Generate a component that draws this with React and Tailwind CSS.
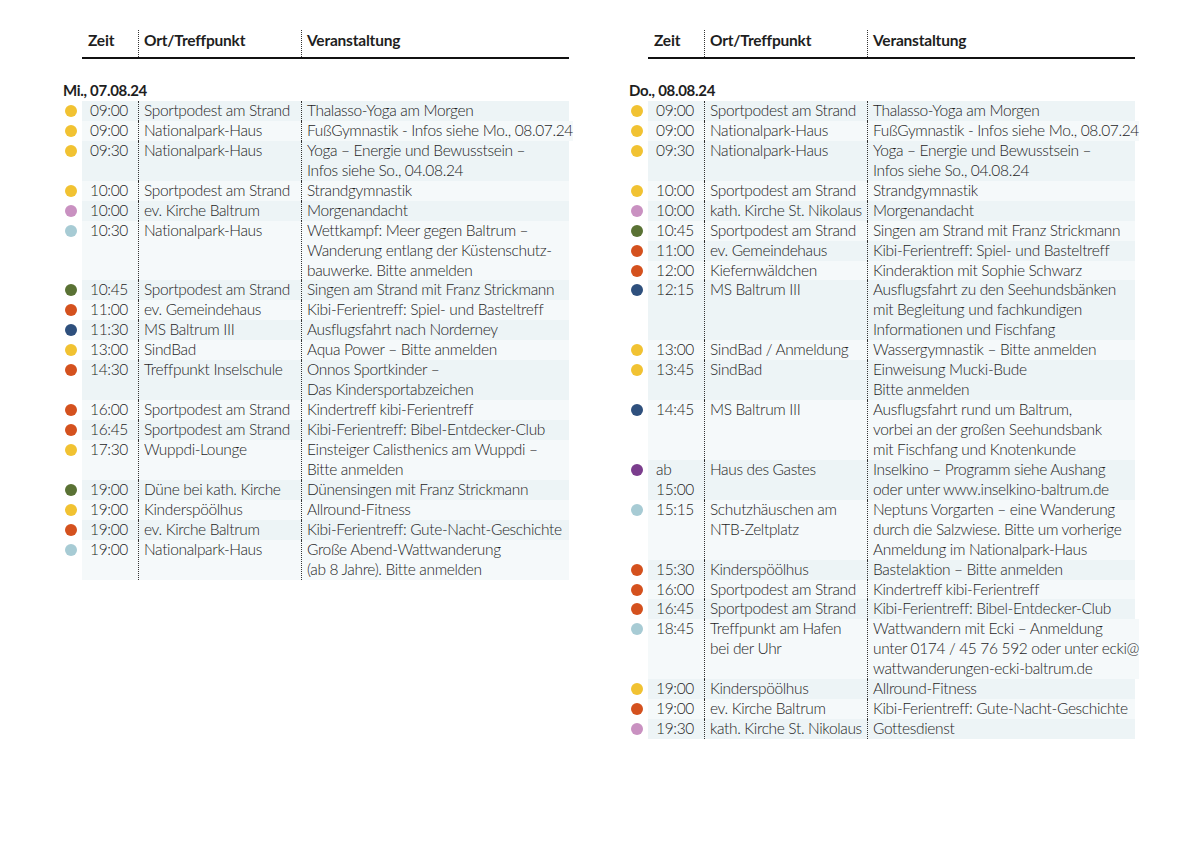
const dotColors = {
  y: "bg-[#f1c232]",
  p: "bg-[#c991c1]",
  b: "bg-[#a7cbd4]",
  g: "bg-[#5a7234]",
  o: "bg-[#d4511e]",
  n: "bg-[#2f507d]",
  v: "bg-[#7b3d8d]",
};

const wednesday = [
  ["y", "09:00", "Sportpodest am Strand", "Thalasso-Yoga am Morgen"],
  ["y", "09:00", "Nationalpark-Haus", "FußGymnastik - Infos siehe Mo., 08.07.24"],
  ["y", "09:30", "Nationalpark-Haus", "Yoga – Energie und Bewusstsein –\nInfos siehe So., 04.08.24"],
  ["y", "10:00", "Sportpodest am Strand", "Strandgymnastik"],
  ["p", "10:00", "ev. Kirche Baltrum", "Morgenandacht"],
  ["b", "10:30", "Nationalpark-Haus", "Wettkampf: Meer gegen Baltrum –\nWanderung entlang der Küstenschutz-\nbauwerke. Bitte anmelden"],
  ["g", "10:45", "Sportpodest am Strand", "Singen am Strand mit Franz Strickmann"],
  ["o", "11:00", "ev. Gemeindehaus", "Kibi-Ferientreff: Spiel- und Basteltreff"],
  ["n", "11:30", "MS Baltrum III", "Ausflugsfahrt nach Norderney"],
  ["y", "13:00", "SindBad", "Aqua Power – Bitte anmelden"],
  ["o", "14:30", "Treffpunkt Inselschule", "Onnos Sportkinder –\nDas Kindersportabzeichen"],
  ["o", "16:00", "Sportpodest am Strand", "Kindertreff kibi-Ferientreff"],
  ["o", "16:45", "Sportpodest am Strand", "Kibi-Ferientreff: Bibel-Entdecker-Club"],
  ["y", "17:30", "Wuppdi-Lounge", "Einsteiger Calisthenics am Wuppdi –\nBitte anmelden"],
  ["g", "19:00", "Düne bei kath. Kirche", "Dünensingen mit Franz Strickmann"],
  ["y", "19:00", "Kinderspöölhus", "Allround-Fitness"],
  ["o", "19:00", "ev. Kirche Baltrum", "Kibi-Ferientreff: Gute-Nacht-Geschichte"],
  ["b", "19:00", "Nationalpark-Haus", "Große Abend-Wattwanderung\n(ab 8 Jahre). Bitte anmelden"],
];

const thursday = [
  ["y", "09:00", "Sportpodest am Strand", "Thalasso-Yoga am Morgen"],
  ["y", "09:00", "Nationalpark-Haus", "FußGymnastik - Infos siehe Mo., 08.07.24"],
  ["y", "09:30", "Nationalpark-Haus", "Yoga – Energie und Bewusstsein –\nInfos siehe So., 04.08.24"],
  ["y", "10:00", "Sportpodest am Strand", "Strandgymnastik"],
  ["p", "10:00", "kath. Kirche St. Nikolaus", "Morgenandacht"],
  ["g", "10:45", "Sportpodest am Strand", "Singen am Strand mit Franz Strickmann"],
  ["o", "11:00", "ev. Gemeindehaus", "Kibi-Ferientreff: Spiel- und Basteltreff"],
  ["o", "12:00", "Kiefernwäldchen", "Kinderaktion mit Sophie Schwarz"],
  ["n", "12:15", "MS Baltrum III", "Ausflugsfahrt zu den Seehundsbänken\nmit Begleitung und fachkundigen\nInformationen und Fischfang"],
  ["y", "13:00", "SindBad / Anmeldung", "Wassergymnastik – Bitte anmelden"],
  ["y", "13:45", "SindBad", "Einweisung Mucki-Bude\nBitte anmelden"],
  ["n", "14:45", "MS Baltrum III", "Ausflugsfahrt rund um Baltrum,\nvorbei an der großen Seehundsbank\nmit Fischfang und Knotenkunde"],
  ["v", "ab\n15:00", "Haus des Gastes", "Inselkino – Programm siehe Aushang\noder unter www.inselkino-baltrum.de"],
  ["b", "15:15", "Schutzhäuschen am\nNTB-Zeltplatz", "Neptuns Vorgarten – eine Wanderung\ndurch die Salzwiese. Bitte um vorherige\nAnmeldung im Nationalpark-Haus"],
  ["o", "15:30", "Kinderspöölhus", "Bastelaktion – Bitte anmelden"],
  ["o", "16:00", "Sportpodest am Strand", "Kindertreff kibi-Ferientreff"],
  ["o", "16:45", "Sportpodest am Strand", "Kibi-Ferientreff: Bibel-Entdecker-Club"],
  ["b", "18:45", "Treffpunkt am Hafen\nbei der Uhr", "Wattwandern mit Ecki – Anmeldung\nunter 0174 / 45 76 592 oder unter ecki@\nwattwanderungen-ecki-baltrum.de"],
  ["y", "19:00", "Kinderspöölhus", "Allround-Fitness"],
  ["o", "19:00", "ev. Kirche Baltrum", "Kibi-Ferientreff: Gute-Nacht-Geschichte"],
  ["p", "19:30", "kath. Kirche St. Nikolaus", "Gottesdienst"],
];

function DayTable({ date, rows }) {
  let divider = "border-l border-dotted border-[#333]";
  return (
    <div className="w-[509px] flex flex-col">
      <div className="ml-[22px] flex h-[29px] border-b-2 border-[#111] font-bold text-[15.5px] leading-[20px] tracking-[-0.2px]">
        <div className="w-[56px] pl-[6px]">Zeit</div>
        <div className={`w-[163px] pl-[5px] ${divider}`}>Ort/Treffpunkt</div>
        <div className={`flex-1 pl-[5px] ${divider}`}>Veranstaltung</div>
      </div>
      <p className="mt-[23px] mb-[2px] ml-[3px] font-bold text-[15px] leading-[17px] tracking-[-0.3px]">{date}</p>
      {rows.map(([color, time, place, event], i) => (
        <div key={i} className="flex leading-[19.93px]">
          <div className="w-[22px] shrink-0">
            <div className={`ml-[5px] mt-[4px] w-[12px] h-[12px] rounded-full ${dotColors[color]}`} />
          </div>
          <div className={`flex flex-1 whitespace-pre-line ${i % 2 === 0 ? "bg-[#edf4f6]" : "bg-[#f5f9fa]"}`}>
            <div className="w-[56px] pl-[8px]">{time}</div>
            <div className={`w-[163px] pl-[5px] whitespace-pre ${divider}`}>{place}</div>
            <div className={`flex-1 pl-[5px] whitespace-pre ${divider}`}>{event}</div>
          </div>
        </div>
      ))}
    </div>
  );
}

export default function App() {
  return (
    <div className="w-[1200px] h-[848px] bg-white text-[#1e1e1e] font-['Lato',sans-serif] font-light text-[15.5px] tracking-[-0.35px] pt-[30px] pl-[60px] flex gap-[57px] items-start">
      <DayTable date="Mi., 07.08.24" rows={wednesday} />
      <DayTable date="Do., 08.08.24" rows={thursday} />
    </div>
  );
}
